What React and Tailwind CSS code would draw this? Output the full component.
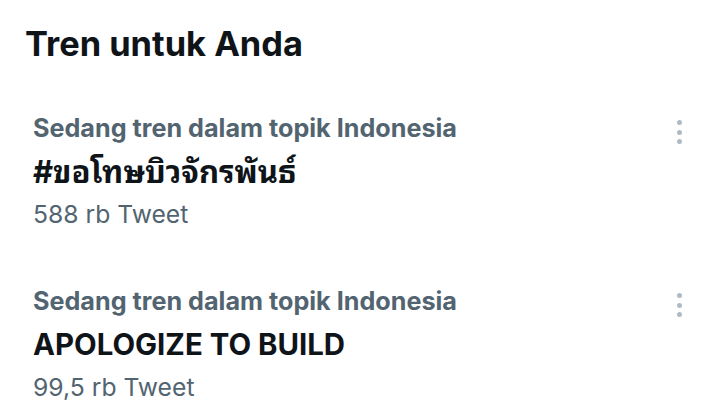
import React from "react";

function Dots() {
  return (
    <div className="flex flex-col items-center gap-[4.5px]">
      <span className="block w-[5px] h-[5px] rounded-full bg-[#b0bac3]" />
      <span className="block w-[5px] h-[5px] rounded-full bg-[#b0bac3]" />
      <span className="block w-[5px] h-[5px] rounded-full bg-[#b0bac3]" />
    </div>
  );
}

function Trend({ title, count, thai }) {
  return (
    <div className="flex justify-between pl-[33px] pr-[38px]">
      <div className="flex flex-col">
        <div className="text-[25.2px] leading-[43px] font-bold text-[#536471]">
          Sedang tren dalam topik Indonesia
        </div>
        <div
          className={
            thai
              ? "text-[31px] leading-[43px] font-bold text-[#0f1419]"
              : "text-[29.4px] leading-[43px] font-bold text-[#0f1419]"
          }
        >
          {title}
        </div>
        <div className="text-[24.7px] leading-[43px] text-[#536471]">{count}</div>
      </div>
      <div className="pt-[13px]">
        <Dots />
      </div>
    </div>
  );
}

export default function App() {
  return (
    <div
      className="w-[720px] h-[403px] bg-white overflow-hidden"
      style={{ fontFamily: "Inter, 'Noto Sans Thai Looped', Garuda, Loma, Kinnari, 'Noto Sans', sans-serif" }}
    >
      <div className="pl-[25px] pt-[22px] text-[34.4px] leading-[44px] font-bold text-[#0f1419]">
        Tren untuk Anda
      </div>
      <div className="pt-[41px] flex flex-col gap-[44px]">
        <Trend title="#ขอโทษบิวจักรพันธ์" count="588 rb Tweet" thai />
        <Trend title="APOLOGIZE TO BUILD" count="99,5 rb Tweet" />
      </div>
    </div>
  );
}
